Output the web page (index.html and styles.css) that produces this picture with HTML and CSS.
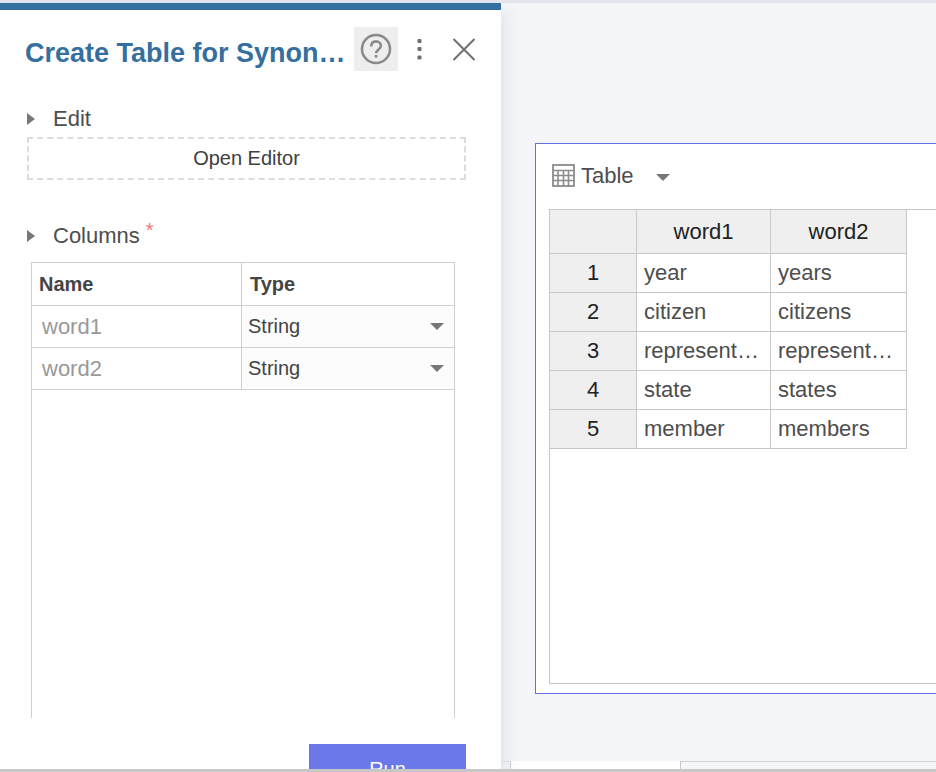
FILE: index.html
```html
<!DOCTYPE html>
<html lang="en">
<head>
  <meta charset="UTF-8">
  <meta name="viewport" content="width=device-width, initial-scale=1.0">
  <title>Create Table</title>
  <link rel="stylesheet" href="styles.css">
</head>
<body>
  <div class="main">
    <div class="panel">
      <div class="panel-header">
        <h2 class="panel-title">Create Table for Synon…</h2>
        <button type="button" class="icon-button help" aria-label="Help">
          <svg width="32" height="32" viewBox="0 0 32 32" fill="none" stroke="#8b8b8b">
            <circle cx="16" cy="16" r="14" stroke-width="2.6"/>
            <path d="M11.3 13.4c0-3.2 2-5 4.8-5s4.8 1.8 4.8 4.3c0 3.6-4.8 3.8-4.8 7.6" stroke-width="2.6"/>
            <path d="M16.1 22v2.6" stroke-width="2.8"/>
          </svg>
        </button>
        <button type="button" class="icon-button" aria-label="More">
          <svg width="24" height="24" viewBox="0 0 24 24" fill="#6e6e6e">
            <rect x="9.5" y="2" width="4" height="4" rx="1"/>
            <rect x="9.5" y="10" width="4" height="4" rx="1"/>
            <rect x="9.5" y="18.500" width="4" height="4" rx="1"/>
          </svg>
        </button>
        <button type="button" class="icon-button" aria-label="Close">
          <svg width="24" height="24" viewBox="0 0 24 24" fill="none" stroke="#6e6e6e" stroke-width="2">
            <path d="M1.500 2l21 21M22.500 2l-21 21"/>
          </svg>
        </button>
      </div>

      <div class="section">
        <button type="button" class="section-title">Edit</button>
        <button type="button" class="open-editor">Open Editor</button>
      </div>

      <div class="section columns-section">
        <button type="button" class="section-title">Columns <span class="required">*</span></button>
        <div class="columns-box">
          <table class="columns-table">
            <thead>
              <tr><th class="name-col">Name</th><th>Type</th></tr>
            </thead>
            <tbody>
              <tr>
                <td class="name-col">word1</td>
                <td class="type-cell">
                  <select aria-label="Type of word1"><option>String</option></select>
                </td>
              </tr>
              <tr>
                <td class="name-col">word2</td>
                <td class="type-cell">
                  <select aria-label="Type of word2"><option>String</option></select>
                </td>
              </tr>
            </tbody>
          </table>
        </div>
      </div>

      <div class="panel-footer">
        <button type="button" class="run-button">Run</button>
      </div>
    </div>

    <div class="workspace">
      <div class="card">
        <button type="button" class="card-title">
          <svg width="24" height="24" viewBox="0 0 24 24" fill="none" stroke="#8c8c8c">
            <rect x="2" y="1" width="21" height="21" stroke-width="1.8"/>
            <path d="M2 6.500h21M2 11.500h21M2 16.500h21M7 6.500v16M12.500 6.500v16M17.500 6.500v16" stroke-width="1.6"/>
          </svg>
          Table
        </button>
        <div class="grid-box">
          <table class="grid">
            <thead>
              <tr><th class="row-num"></th><th class="word1">word1</th><th class="word2">word2</th></tr>
            </thead>
            <tbody>
              <tr><th>1</th><td>year</td><td>years</td></tr>
              <tr><th>2</th><td>citizen</td><td>citizens</td></tr>
              <tr><th>3</th><td>represent…</td><td>represent…</td></tr>
              <tr><th>4</th><td>state</td><td>states</td></tr>
              <tr><th>5</th><td>member</td><td>members</td></tr>
            </tbody>
          </table>
        </div>
      </div>
      <div class="tabs">
        <div class="tab-edge"></div>
        <div class="tab-active"></div>
        <div class="tab-rest"></div>
      </div>
    </div>
  </div>
  <div class="bottom-bar"></div>
</body>
</html>
```

FILE: styles.css
```css
* {
  box-sizing: border-box;
}

body {
  display: flex;
  flex-direction: column;
  height: 100vh;
  margin: 0;
  overflow: hidden;
  border-top: 3px solid #e3e5ee;
  background-color: #f4f5f8;
  color: #4d4d4d;
  font-family: "Liberation Sans", Arial, sans-serif;
  font-size: 22px;
}

button,
select {
  margin: 0;
  padding: 0;
  border: 0;
  background: none;
  color: inherit;
  font: inherit;
}

.main {
  display: flex;
  flex: 1;
  min-height: 0;
  overflow: hidden;
}

/* left panel */
.panel {
  position: relative;
  flex: 0 0 501px;
  border-top: 7px solid #356f9f;
  background-color: #fff;
  box-shadow: 2px 8px 16px #d8dee7;
}

.panel-header {
  display: flex;
  align-items: center;
  padding: 17px 15px 0 25px;
}

.panel-title {
  flex: 1;
  margin: 0;
  padding-top: 8px;
  overflow: hidden;
  color: #356f9f;
  font-size: 27px;
  line-height: 32px;
  white-space: nowrap;
}

.icon-button {
  display: flex;
  align-items: center;
  justify-content: center;
  width: 44px;
  height: 44px;
}

.icon-button.help {
  background-color: #eee;
}

.section {
  margin: 30px 35px 0 27px;
}

.columns-section {
  margin-top: 38px;
}

.section-title {
  display: flex;
  align-items: center;
  height: 36px;
}

.section-title::before {
  content: "";
  margin-right: 18px;
  border-left: 8px solid #777;
  border-top: 6px solid transparent;
  border-bottom: 6px solid transparent;
}

.required {
  align-self: flex-start;
  margin-left: 6px;
  color: #f07878;
  font-size: 20px;
  line-height: 24px;
}

.open-editor {
  width: 100%;
  height: 43px;
  border: 2px dashed #dcdcdc;
  color: #404040;
  font-size: 20px;
}

.columns-box {
  height: 456px;
  margin: 8px 11px 0 4px;
  border: 1px solid #d0d0d0;
  border-bottom: 0;
}

.columns-table {
  width: 100%;
  border-collapse: separate;
  border-spacing: 0;
  table-layout: fixed;
}

.columns-table th,
.columns-table td {
  height: 42px;
  padding: 0;
  border-bottom: 1px solid #d0d0d0;
}

.columns-table th {
  height: 43px;
  padding-left: 8px;
  color: #444;
  font-size: 20px;
  text-align: left;
}

.columns-table .name-col {
  width: 210px;
  border-right: 1px solid #d0d0d0;
}

.columns-table th.name-col {
  padding-left: 7px;
}

.columns-table td.name-col {
  padding-left: 10px;
  color: #999;
}

.type-cell {
  position: relative;
  background-color: #fcfcfc;
}

.type-cell select {
  display: block;
  width: 100%;
  height: 41px;
  padding: 0 0 1px 6px;
  appearance: none;
  color: #444;
  font-size: 20px;
}

/* dropdown arrow */
.type-cell::after,
.card-title::after {
  content: "";
  border-top: 7px solid #777;
  border-left: 7px solid transparent;
  border-right: 7px solid transparent;
}

.type-cell::after {
  position: absolute;
  top: 17px;
  right: 10px;
  pointer-events: none;
}

.panel-footer {
  display: flex;
  justify-content: flex-end;
  padding: 26px 35px;
}

.run-button {
  width: 157px;
  height: 50px;
  background-color: #6b78ea;
  color: #fff;
  font-size: 20px;
}

/* right side */
.workspace {
  display: flex;
  flex: 1;
  flex-direction: column;
  min-width: 0;
}

.card {
  display: flex;
  flex: 1;
  flex-direction: column;
  margin: 140px 0 67px 34px;
  padding: 14px 0 9px 13px;
  border: 1px solid #636ee6;
  border-right: 0;
  background-color: #fff;
}

.card-title {
  display: flex;
  align-items: center;
  gap: 6px;
  height: 36px;
  margin: 0 0 15px 2px;
}

.card-title::after {
  margin: 2px 0 0 16px;
}

.grid-box {
  flex: 1;
  border: 1px solid #c8c8c8;
  border-right: 0;
}

.grid {
  width: 357px;
  border-collapse: separate;
  border-spacing: 0;
  table-layout: fixed;
}

.grid th,
.grid td {
  height: 39px;
  padding: 0;
  border-right: 1px solid #c8c8c8;
  border-bottom: 1px solid #c8c8c8;
}

.grid th {
  background-color: #efefef;
  color: #222;
  font-weight: normal;
}

.grid thead th {
  height: 44px;
}

.grid td {
  padding-left: 7px;
}

.grid .row-num {
  width: 87px;
}

.grid .word1 {
  width: 134px;
}

.tabs {
  display: flex;
  height: 8px;
}

.tab-edge {
  width: 10px;
  border-top: 1px solid #d5d8dd;
  border-right: 1px solid #c8c8c8;
}

.tab-active {
  width: 170px;
  border-right: 1px solid #c8c8c8;
  background-color: #fff;
}

.tab-rest {
  flex: 1;
  border-top: 1px solid #d0d2d6;
}

.bottom-bar {
  height: 3px;
  background-color: #c8c8c8;
}
```
